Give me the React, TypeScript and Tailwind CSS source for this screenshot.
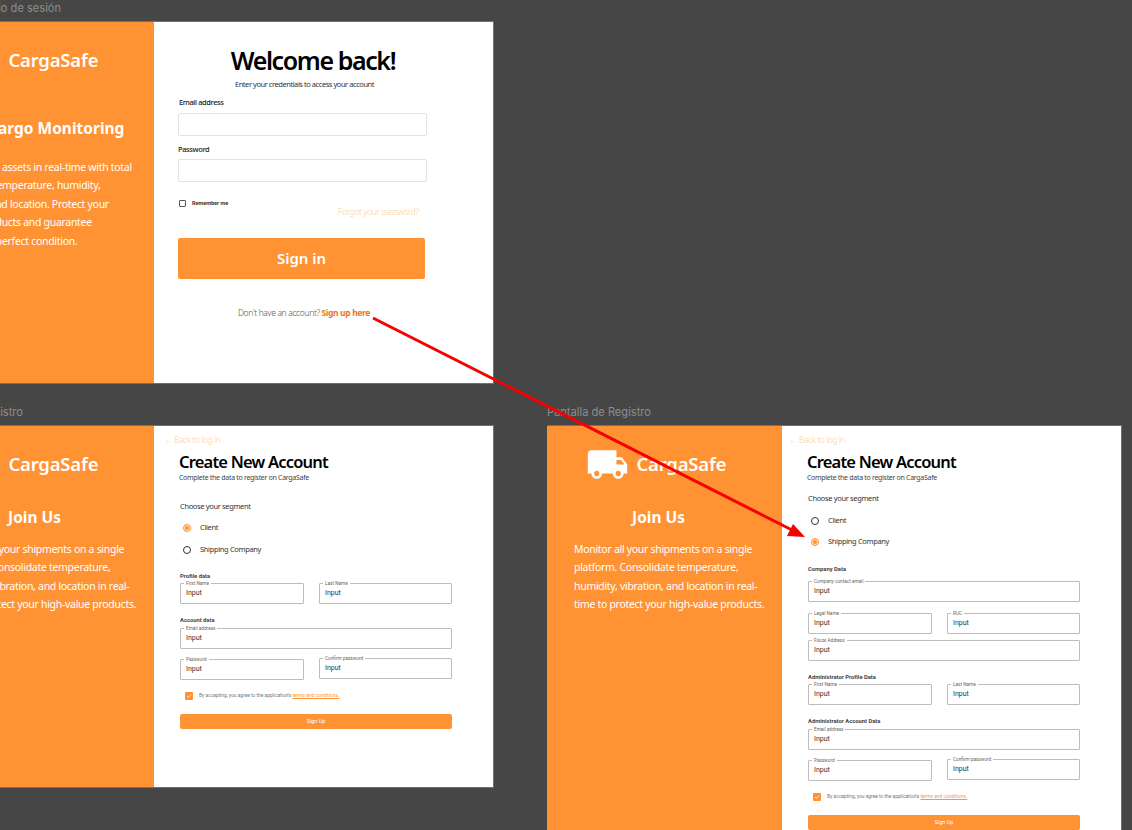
import type { ReactNode } from 'react';
import { MdLocalShipping } from 'react-icons/md';

const heading = "font-['Noto_Sans',sans-serif]";

function Field({ label, className = '' }: { label: string; className?: string }) {
  return (
    <div className={`relative h-[21px] border border-[#bcbcbc] rounded-[1px] pl-[5px] flex items-center ${className}`}>
      <span className="absolute left-[3px] top-[-3px] bg-white px-[2px] text-[4.7px] leading-[5px] text-[#666] font-['Roboto',sans-serif]">
        {label}
      </span>
      <span className="text-[7px] text-[#333] font-['Roboto',sans-serif]">Input</span>
    </div>
  );
}

function Radio({ checked, label }: { checked?: boolean; label: string }) {
  return (
    <div className="flex items-center h-[10px]">
      <span className={`ml-[3px] w-[8px] h-[8px] rounded-full border flex items-center justify-center ${checked ? 'border-[#ff9232] bg-[#ffe3c9]' : 'border-[#333] bg-white'}`}>
        {checked && <span className="w-[4px] h-[4px] rounded-full bg-[#ff9232]" />}
      </span>
      <span className={`ml-[9px] text-[7.5px] tracking-[-0.35px] text-[#333] ${heading}`}>{label}</span>
    </div>
  );
}

function SectionTitle({ children, className = '' }: { children: ReactNode; className?: string }) {
  return <p className={`text-[5.8px] leading-[7px] font-bold text-[#444] font-['Roboto',sans-serif] ${className}`}>{children}</p>;
}

function Terms({ className = '' }: { className?: string }) {
  return (
    <div className={`flex items-center pl-[5px] ${className}`}>
      <span className="w-[8px] h-[8px] rounded-[1px] bg-[#ff9232] flex items-center justify-center">
        <svg viewBox="0 0 8 8" className="w-[6px] h-[6px]" fill="none" stroke="white" strokeWidth="1">
          <path d="M1.5 4.2 3.2 6 6.5 2" />
        </svg>
      </span>
      <span className="ml-[6px] text-[4.85px] text-[#777] font-['Roboto',sans-serif]">
        By accepting, you agree to the application's <span className="text-[#ff9232] underline">terms and conditions.</span>
      </span>
    </div>
  );
}

function SignUpButton({ className = '' }: { className?: string }) {
  return (
    <div className={`w-[272px] h-[15px] rounded-[2px] bg-[#ff9232] flex items-center justify-center text-white text-[5.5px] font-['Roboto',sans-serif] ${className}`}>
      Sign Up
    </div>
  );
}

function BrandPanel({ title, titleTop, titleLeft, textTop, lines }: { title: string; titleTop: number; titleLeft: number; textTop: number; lines: string[] }) {
  return (
    <div className="w-[235px] h-full shrink-0 bg-[#ff9232] text-white flex flex-col">
      <div className="flex items-center h-[28px] mt-[24px] ml-[39px] gap-[7.5px]">
        <MdLocalShipping className="w-[43px] h-[43px]" />
        <span className={`text-[18.5px] tracking-[-0.2px] font-semibold leading-none ${heading}`}>CargaSafe</span>
      </div>
      <h2 className={`text-[15.5px] font-bold leading-[20px] whitespace-nowrap ${heading}`} style={{ marginTop: titleTop, marginLeft: titleLeft }}>{title}</h2>
      <div className={`ml-[27px] text-[10.5px] tracking-[-0.3px] leading-[18.4px] whitespace-nowrap ${heading}`} style={{ marginTop: textTop }}>
        {lines.map((l) => <p key={l}>{l}</p>)}
      </div>
    </div>
  );
}

function LoginFrame() {
  return (
    <div className="absolute left-[-81px] top-[22px] w-[574px] h-[361px] flex bg-white shadow-[1px_1px_0_#707070,1px_-1px_0_#707070]">
      <BrandPanel
        title="Cargo Monitoring"
        titleTop={44}
        titleLeft={69}
        textTop={20}
        lines={['Follow your assets in real-time with total', 'control of temperature, humidity,', 'vibration and location. Protect your', 'valued products and guarantee', 'delivery in perfect condition.']}
      />
      <div className="flex-1 flex flex-col pl-[24px]">
        <h1 className={`mt-[21px] w-[270px] text-center text-[25px] tracking-[-1.4px] leading-[34px] font-semibold text-black ${heading}`}>Welcome back!</h1>
        <p className={`mt-[2px] w-[253px] text-center text-[7.5px] tracking-[-0.45px] leading-[10px] text-[#333] ${heading}`}>Enter your credentials to access your account</p>
        <label className={`mt-[8px] ml-[1px] text-[7.5px] tracking-[-0.4px] leading-[10px] font-medium text-[#222] ${heading}`}>Email address</label>
        <div className="mt-[6px] w-[249px] h-[23px] border border-[#e2e2e2] rounded-[2px]" />
        <label className={`mt-[8px] text-[7.5px] tracking-[-0.4px] leading-[10px] font-medium text-[#222] ${heading}`}>Password</label>
        <div className="mt-[5px] w-[249px] h-[23px] border border-[#e2e2e2] rounded-[2px]" />
        <div className="mt-[18px] flex items-center h-[7px] pl-[1px]">
          <span className="w-[7px] h-[7px] border border-[#555] rounded-[1px]" />
          <span className="ml-[6px] text-[5.5px] font-bold text-[#333] font-['Roboto',sans-serif]">Remember me</span>
        </div>
        <p className={`mt-[-1px] ml-[160px] text-[8.5px] tracking-[-0.35px] leading-[12px] font-light text-[#fbcfa3] ${heading}`}>Forgot your password?</p>
        <div className={`mt-[20px] w-[247px] h-[41px] rounded-[2px] bg-[#ff9232] flex items-center justify-center text-white text-[15px] font-semibold ${heading}`}>Sign in</div>
        <p className={`mt-[28px] ml-[1px] w-[250px] text-center text-[8.5px] tracking-[-0.35px] leading-[12px] font-light text-[#555] ${heading}`}>
          Don't have an account? <span className="font-bold text-[#e8761d]">Sign up here</span>
        </p>
      </div>
    </div>
  );
}

function RegisterHead({ backClass }: { backClass: string }) {
  return (
    <>
      <p className={`${backClass} mt-[8px] text-[8.5px] tracking-[-0.4px] leading-[12px] font-light text-[#fbcfa3] ${heading}`}>← Back to log in</p>
      <h1 className={`mt-[5px] text-[16.5px] tracking-[-0.8px] leading-[22px] font-semibold text-black ${heading}`}>Create New Account</h1>
      <p className={`mt-[0px] text-[7px] tracking-[-0.3px] leading-[10px] text-[#444] ${heading}`}>Complete the data to register on CargaSafe</p>
    </>
  );
}

function ClientFrame() {
  return (
    <div className="absolute left-[-81px] top-[426px] w-[574px] h-[361px] flex bg-white shadow-[1px_1px_0_#707070,1px_-1px_0_#707070]">
      <BrandPanel
        title="Join Us"
        titleTop={29}
        titleLeft={89}
        textTop={13}
        lines={['Monitor all your shipments on a single', 'platform. Consolidate temperature,', 'humidity, vibration, and location in real-', 'time to protect your high-value products.']}
      />
      <div className="flex-1 flex flex-col pl-[25px]">
        <RegisterHead backClass="ml-[-15px]" />
        <div className="ml-[1px] w-[272px] flex flex-col">
          <p className={`mt-[18px] text-[7.5px] tracking-[-0.35px] leading-[10px] text-[#333] ${heading}`}>Choose your segment</p>
          <div className="mt-[12px]"><Radio checked label="Client" /></div>
          <div className="mt-[12px]"><Radio label="Shipping Company" /></div>
          <SectionTitle className="mt-[18px]">Profile data</SectionTitle>
          <div className="mt-[3px] grid grid-cols-[124px_133px] gap-x-[15px]">
            <Field label="First Name" />
            <Field label="Last Name" />
          </div>
          <SectionTitle className="mt-[13px]">Account data</SectionTitle>
          <Field label="Email address" className="mt-[4px]" />
          <div className="mt-[10px] grid grid-cols-[124px_133px] gap-x-[15px]">
            <Field label="Password" />
            <Field label="Confirm password" className="mt-[-1px]" />
          </div>
          <Terms className="mt-[12px]" />
          <SignUpButton className="mt-[14px]" />
        </div>
      </div>
    </div>
  );
}

function CompanyFrame() {
  return (
    <div className="absolute left-[547px] top-[426px] w-[574px] h-[430px] flex bg-white shadow-[1px_1px_0_#707070,1px_-1px_0_#707070]">
      <BrandPanel
        title="Join Us"
        titleTop={29}
        titleLeft={85}
        textTop={13}
        lines={['Monitor all your shipments on a single', 'platform. Consolidate temperature,', 'humidity, vibration, and location in real-', 'time to protect your high-value products.']}
      />
      <div className="flex-1 flex flex-col pl-[25px]">
        <RegisterHead backClass="ml-[-18px]" />
        <div className="ml-[1px] w-[272px] flex flex-col">
          <p className={`mt-[10px] text-[7.5px] tracking-[-0.35px] leading-[10px] text-[#333] ${heading}`}>Choose your segment</p>
          <div className="mt-[13px]"><Radio label="Client" /></div>
          <div className="mt-[11px]"><Radio checked label="Shipping Company" /></div>
          <SectionTitle className="mt-[19px]">Company Data</SectionTitle>
          <Field label="Company contact email" className="mt-[8px]" />
          <div className="mt-[11px] grid grid-cols-[124px_133px] gap-x-[15px]">
            <Field label="Legal Name" />
            <Field label="RUC" />
          </div>
          <Field label="Fiscal Address" className="mt-[6px]" />
          <SectionTitle className="mt-[13px]">Administrator Profile Data</SectionTitle>
          <div className="mt-[3px] grid grid-cols-[124px_133px] gap-x-[15px]">
            <Field label="First Name" />
            <Field label="Last Name" />
          </div>
          <SectionTitle className="mt-[13px]">Administrator Account Data</SectionTitle>
          <Field label="Email address" className="mt-[4px]" />
          <div className="mt-[10px] grid grid-cols-[124px_133px] gap-x-[15px]">
            <Field label="Password" />
            <Field label="Confirm password" className="mt-[-1px]" />
          </div>
          <Terms className="mt-[12px]" />
          <SignUpButton className="mt-[14px]" />
        </div>
      </div>
    </div>
  );
}

export default function App() {
  return (
    <div className="relative w-[1132px] h-[830px] overflow-hidden bg-[#464646]">
      <span className="absolute left-[-81px] top-[0px] text-[11.1px] text-[#8d8d8d] font-['Inter',sans-serif]">Pantalla de inicio de sesión</span>
      <span className="absolute left-[-81px] top-[404px] text-[11.1px] text-[#8d8d8d] font-['Inter',sans-serif]">Pantalla de Registro</span>
      <span className="absolute left-[547px] top-[404px] text-[11.1px] text-[#8d8d8d] font-['Inter',sans-serif]">Pantalla de Registro</span>
      <LoginFrame />
      <ClientFrame />
      <CompanyFrame />
      {/* prototype link arrow */}
      <svg className="absolute inset-0 w-[1132px] h-[830px] pointer-events-none" viewBox="0 0 1132 830" fill="none">
        <path d="M373 318 792 530" stroke="#f60000" strokeWidth="3" />
        <path d="M805 537 787 536 793 524Z" fill="#f60000" />
      </svg>
    </div>
  );
}
